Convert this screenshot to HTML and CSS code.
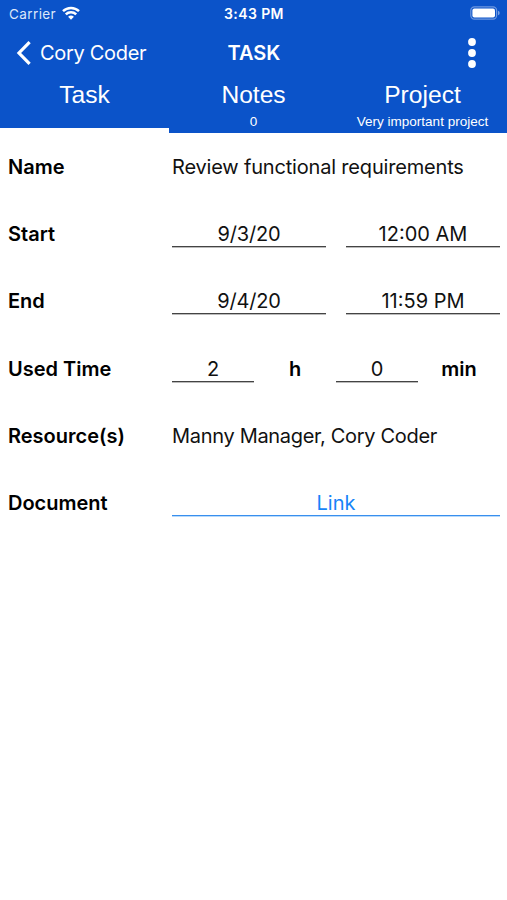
FILE: index.html
```html
<!DOCTYPE html>
<html lang="en">
<head>
<meta charset="utf-8">
<title>Task</title>
<link rel="stylesheet" href="styles.css">
</head>
<body>
<header class="header">
  <div class="status">
    <div class="carrier"><span>Carrier</span>
      <svg class="wifi" width="18" height="14" viewBox="0 0 18 14" fill="none" stroke="#fff" stroke-width="2.5"><path d="M1 5.1a11.6 11.6 0 0 1 16 0M3.8 8.4a7.4 7.4 0 0 1 10.4 0"/><path d="M9 13.7 6.1 10.8a4.2 4.2 0 0 1 5.8 0z" fill="#fff" stroke="none"/></svg>
    </div>
    <span class="clock">3:43 PM</span>
    <svg class="battery" width="31" height="14" viewBox="0 0 31 14"><rect x=".8" y=".8" width="25.8" height="12.4" rx="3.6" fill="none" stroke="#6e98df" stroke-width="1.2"/><rect x="2.4" y="2.4" width="22.6" height="9.2" rx="2" fill="#fff"/><path d="M28 4.8q1.7.5 1.7 2.2T28 9.2z" fill="#7ca2e2"/></svg>
  </div>
  <div class="nav">
    <a class="back"><svg class="chevron" width="16" height="26" viewBox="0 0 16 26" fill="none" stroke="#fff" stroke-width="3.2"><path d="M13.6 2.2 3 13l10.6 10.8"/></svg><span>Cory Coder</span></a>
    <h1 class="title">TASK</h1>
    <svg class="more" width="8" height="30" viewBox="0 0 8 30" fill="#fff"><circle cx="4" cy="4" r="3.9"/><circle cx="4" cy="15" r="3.9"/><circle cx="4" cy="26" r="3.9"/></svg>
  </div>
  <nav class="tabs">
    <div class="tab active"><span class="tab-name">Task</span></div>
    <div class="tab"><span class="tab-name">Notes</span><span class="tab-info">0</span></div>
    <div class="tab"><span class="tab-name">Project</span><span class="tab-info">Very important project</span></div>
  </nav>
</header>
<main class="form">
  <div class="row"><span class="label">Name</span><div class="value"><span class="text">Review functional requirements</span></div></div>
  <div class="row"><span class="label">Start</span><div class="value pair"><span class="field date">9/3/20</span><span class="field">12:00 AM</span></div></div>
  <div class="row"><span class="label">End</span><div class="value pair"><span class="field date">9/4/20</span><span class="field">11:59 PM</span></div></div>
  <div class="row"><span class="label">Used Time</span><div class="value time"><span class="field">2</span><span class="unit">h</span><span class="field">0</span><span class="unit">min</span></div></div>
  <div class="row"><span class="label">Resource(s)</span><div class="value"><span class="people">Manny Manager, Cory Coder</span></div></div>
  <div class="row"><span class="label">Document</span><div class="value"><a class="field link">Link</a></div></div>
</main>
</body>
</html>
```
FILE: styles.css
```css
* { box-sizing: border-box; }
body { margin: 0; height: 900px; overflow: hidden; background: #fff; color: #111; font-family: Inter, "Liberation Sans", sans-serif; font-size: 20px; line-height: 24px; white-space: nowrap; }
.header { height: 133px; color: #fff; background: #0b53c9; }
.status { height: 28px; display: grid; grid-template-columns: 1fr auto 1fr; align-items: center; padding: 0 6px 0 9px; font-size: 13.5px; line-height: 18px; }
.carrier { display: flex; align-items: center; gap: 6px; color: #dce7f9; letter-spacing: .4px; }
.wifi { display: block; margin-top: -2px; }
.clock { font-weight: 600; font-size: 14px; letter-spacing: .4px; margin-right: 2px; }
.battery { justify-self: end; margin-top: -2px; }
.nav { height: 50px; display: grid; grid-template-columns: 1fr auto 1fr; align-items: center; padding: 0 31px 0 16px; }
.back { display: flex; align-items: center; gap: 8px; letter-spacing: -.3px; }
.chevron { margin-top: -1px; }
.title { margin: 0 0 0 16px; font-size: 20px; line-height: 24px; font-weight: 600; }
.more { justify-self: end; margin-top: -1px; }
.tabs { height: 55px; display: grid; grid-template-columns: repeat(3, 1fr); font-family: "Liberation Sans", Arial, sans-serif; text-align: center; }
.tab { display: flex; flex-direction: column; align-items: center; padding-top: 3px; }
.active { border-bottom: 5px solid #fff; }
.tab-name { font-size: 24.6px; line-height: 28px; }
.tab-info { font-size: 13.5px; line-height: 16px; margin-top: 5px; }
.form { display: grid; grid-template-rows: 67px 67px 68px 67px 67px 67px; padding: 0 7px 0 8px; }
.row { display: grid; grid-template-columns: 164px 1fr; align-items: start; padding-top: 22px; }
.label, .unit { font-weight: 600; color: #000; }
.value { width: 328px; }
.text { letter-spacing: -.18px; }
.people { letter-spacing: -.31px; }
.date { letter-spacing: -.2px; }
.pair { display: grid; grid-template-columns: 154px 154px; gap: 20px; }
.time { display: grid; grid-template-columns: repeat(4, 82px); text-align: center; }
.field { display: block; text-align: center; height: 25px; border-bottom: 1px solid #444; box-shadow: 0 1px 0 #bbb; }
.link { color: #1684f8; border-color: #398fee; box-shadow: 0 1px 0 #b8dafb; }
```
